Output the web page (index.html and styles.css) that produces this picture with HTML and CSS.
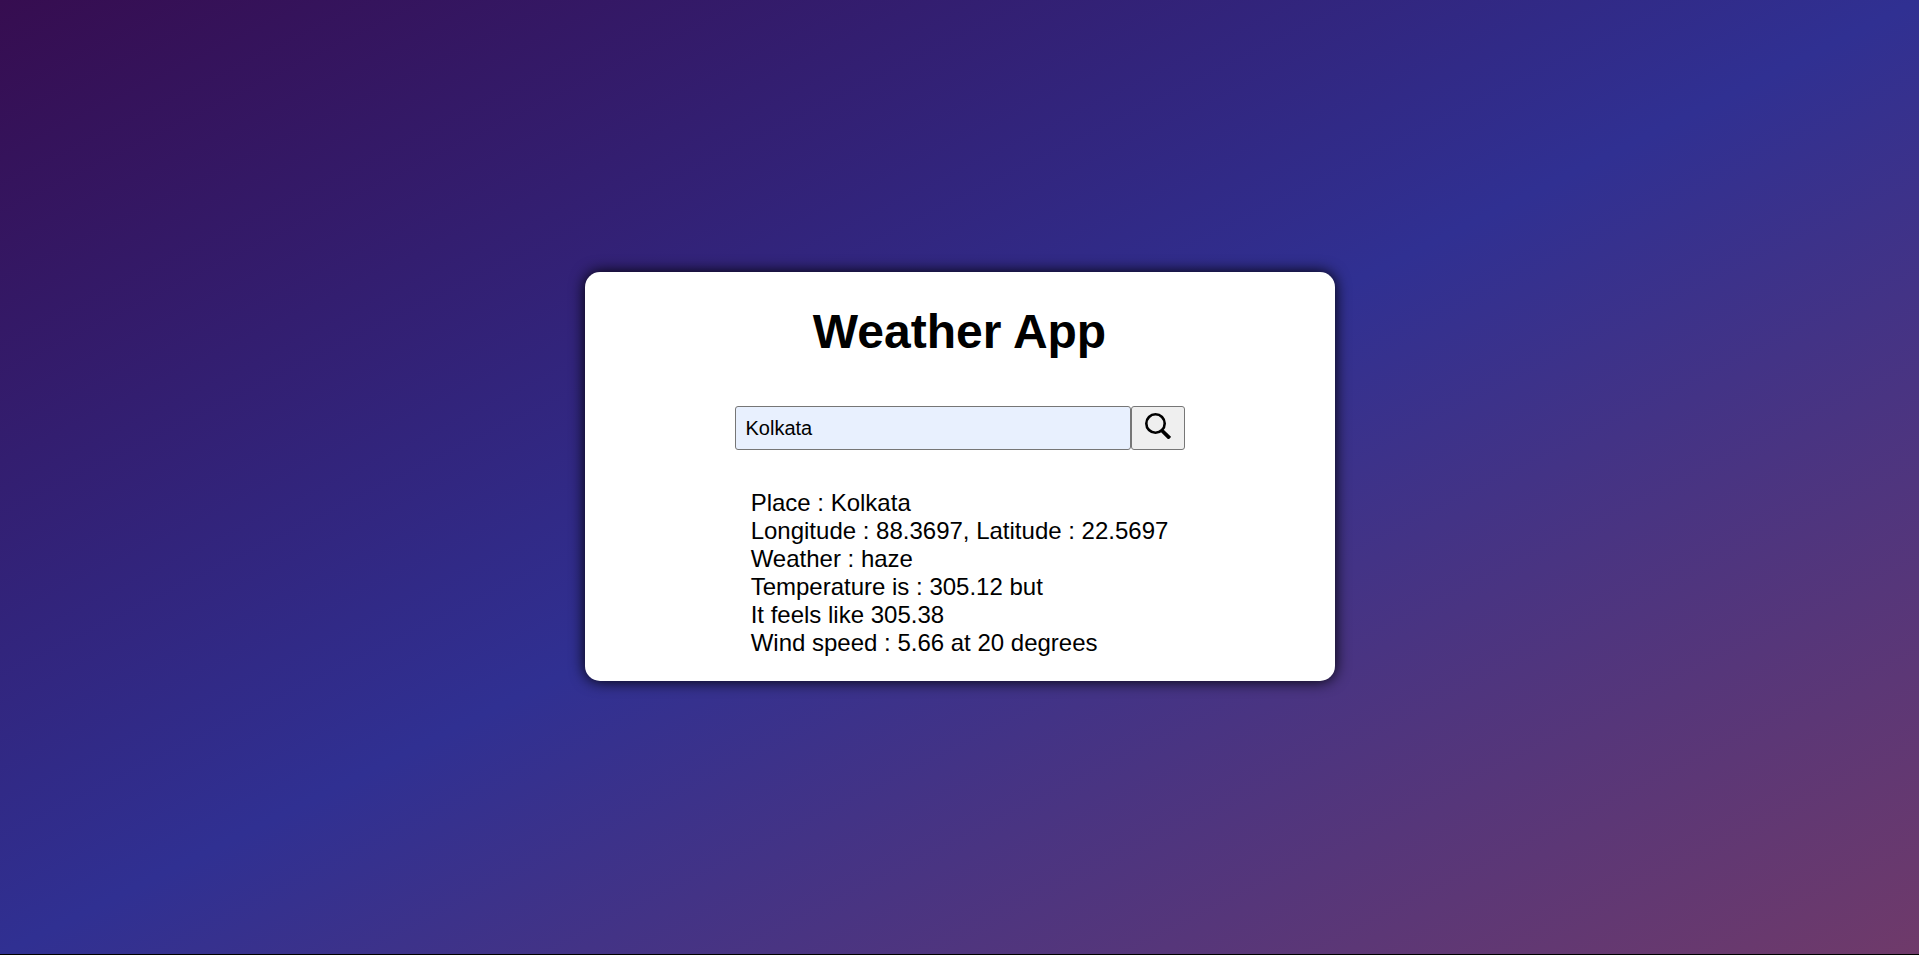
FILE: index.html
```html
<!DOCTYPE html>
<html lang="en">
<head>
<meta charset="utf-8">
<meta name="viewport" content="width=device-width, initial-scale=1">
<title>Weather App</title>
<link rel="stylesheet" href="styles.css">
</head>
<body>
<div class="page">
  <main class="card">
    <h1 class="title">Weather App</h1>
    <form class="search">
      <input class="search-input" type="text" name="city" value="Kolkata" aria-label="City">
      <button class="search-button" type="button" aria-label="Search">
        <svg class="search-icon" viewBox="0 0 26 26" aria-hidden="true">
          <circle cx="10.5" cy="10.5" r="9.2" fill="none" stroke="#000" stroke-width="2.6"/>
          <path d="M16.6 17.2L18 18.6" stroke="#000" stroke-width="2.6"/>
          <path d="M17.4 18L24.8 25.3" stroke="#000" stroke-width="3.8"/>
        </svg>
      </button>
    </form>
    <p class="report">
      Place : Kolkata<br>
      Longitude : 88.3697, Latitude : 22.5697<br>
      Weather : haze<br>
      Temperature is : 305.12 but<br>
      It feels like 305.38<br>
      Wind speed : 5.66 at 20 degrees
    </p>
  </main>
</div>
</body>
</html>
```
FILE: styles.css
```css
* {
  box-sizing: border-box;
}

html {
  background: #000;
}

body {
  margin: 0;
  font-family: "Liberation Sans", Arial, sans-serif;
  color: #000;
}

.page {
  display: flex;
  align-items: center;
  justify-content: center;
  min-height: calc(100vh - 1px);
  padding-bottom: 1px;
  background: linear-gradient(to right bottom, #360d50, #303092, #6f3a6a);
}

.card {
  display: flex;
  flex-direction: column;
  align-items: center;
  width: 90%;
  max-width: 750px;
  background: #fff;
  border-radius: 15px;
  box-shadow: 0 0 15px #000;
}

.title {
  margin: 32px 0;
  font-size: 48px;
  line-height: 55px;
}

.search {
  display: flex;
  width: 60%;
  margin: 15px 0;
}

.search-input {
  flex: 1;
  min-width: 0;
  height: 44px;
  padding: 0 10px;
  border: 1px solid #767676;
  border-radius: 3px;
  background: #e8f0fe;
  color: #000;
  font-family: inherit;
  font-size: 20px;
}

.search-button {
  display: flex;
  align-items: flex-start;
  justify-content: center;
  width: 54px;
  height: 44px;
  padding: 6px 0 0;
  border: 1px solid #767676;
  border-radius: 3px;
  background: #efefef;
}

.search-icon {
  width: 26px;
  height: 26px;
}

.report {
  margin: 24px 0;
  font-size: 24px;
  line-height: 28px;
}
```
